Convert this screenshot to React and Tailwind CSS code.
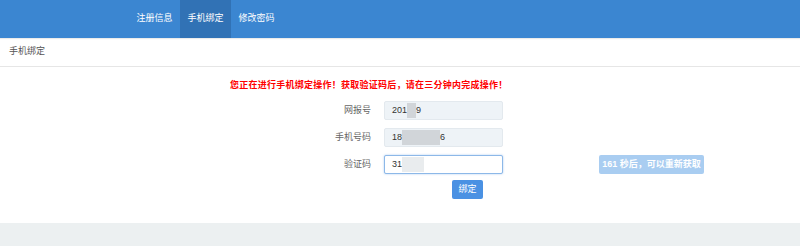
const FONT = { fontFamily: '"Liberation Sans", "Noto Sans CJK SC", sans-serif' }

const tabs = [
  { label: '注册信息' },
  { label: '手机绑定', active: true },
  { label: '修改密码' },
]

// mosaic block used to mask personal numbers in the screenshot
function Mask({ w, shade = 'bg-[#c9cdd1]' }) {
  return <span className={`inline-block h-[15px] ${shade} opacity-80`} style={{ width: w }} />
}

function Field({ label, children, focused }) {
  return (
    <div className="flex items-center">
      <div className="w-[371px] text-right text-[9px] text-[#666]">{label}</div>
      <div
        className={
          focused
            ? 'ml-[13px] flex h-[19px] w-[119px] items-center rounded-[2px] border border-[#8db8e8] bg-white pl-[7px] text-[9px] text-[#333] shadow-[0_0_2px_rgba(74,144,226,0.5)]'
            : 'ml-[13px] flex h-[19px] w-[119px] items-center rounded-[2px] border border-[#e3e9ee] bg-[#eef3f7] pl-[7px] text-[9px] text-[#333]'
        }
      >
        {children}
      </div>
    </div>
  )
}

export default function App() {
  return (
    <div className="flex h-[246px] w-[800px] flex-col bg-white" style={FONT}>
      <nav className="flex h-[38px] bg-[#3b86d1] pl-[129px] shadow-[0_1px_1px_rgba(0,0,0,0.08)]">
        {tabs.map(t => (
          <div
            key={t.label}
            className={`flex w-[51px] items-center justify-center text-[9px] text-white ${t.active ? 'bg-[#3172b5]' : ''}`}
          >
            {t.label}
          </div>
        ))}
      </nav>

      <div className="flex h-[29px] items-center border-b border-[#e6e6e6] pl-[9px] text-[9px] text-[#555]">
        手机绑定
      </div>

      <div className="flex flex-1 flex-col">
        <p className="mt-[12px] pl-[230px] text-[9px] font-bold leading-[12px] tracking-[0.25px] text-[#ff0000]">
          您正在进行手机绑定操作！获取验证码后，请在三分钟内完成操作！
        </p>

        <div className="mt-[10px] flex flex-col gap-[7px]">
          <Field label="网报号">
            <span>201</span>
            <Mask w={9} />
            <span>9</span>
          </Field>
          <div className="mt-[1px]">
            <Field label="手机号码">
              <span>18</span>
              <Mask w={38} />
              <span>6</span>
            </Field>
          </div>
          <div className="mt-[1px] flex items-center">
            <Field label="验证码" focused>
              <span>31</span>
              <Mask w={22} shade="bg-[#e4e7ea]" />
            </Field>
            <button className="ml-[96px] h-[19px] w-[105px] rounded-[2px] bg-[#a9cdf1] text-[9px] font-bold text-white">
              161 秒后，可以重新获取
            </button>
          </div>
        </div>

        <div className="mt-[6px] flex pl-[452px]">
          <button className="h-[19px] w-[31px] rounded-[2px] bg-[#4a91e3] text-[9px] text-white">
            绑定
          </button>
        </div>
      </div>

      <div className="h-[23px] bg-[#ecf0f1]" />
    </div>
  )
}
